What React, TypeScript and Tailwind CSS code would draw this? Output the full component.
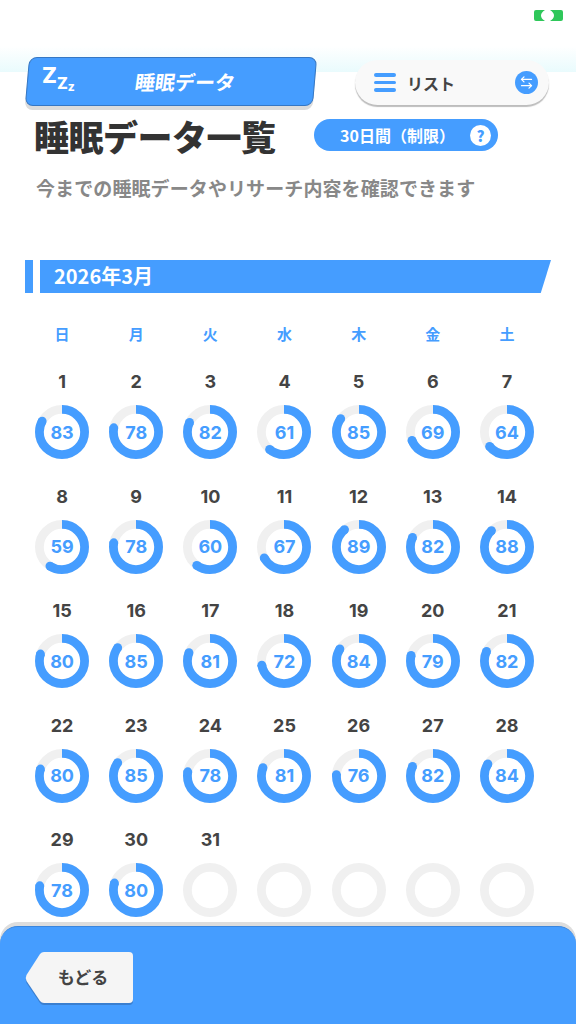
import { ArrowLeftRight } from 'lucide-react'

const SCORES = [
  83, 78, 82, 61, 85, 69, 64, 59, 78, 60, 67, 89, 82, 88, 80, 85, 81, 72, 84, 79, 82, 80, 85, 78, 81, 76, 82, 84, 78, 80,
  null,
]
const WEEKDAYS = ['日', '月', '火', '水', '木', '金', '土']
const BLUE = '#459dff'
const JP = "font-['Noto_Sans_CJK_JP',sans-serif]"

function Ring({ score }: { score: number | null }) {
  const r = 22.6
  const c = 2 * Math.PI * r
  const angle = ((score ?? 0) / 100) * 2 * Math.PI
  return (
    <div className="relative h-[54px] w-[54px]">
      <svg viewBox="0 0 54 54" className="h-full w-full">
        <circle cx="27" cy="27" r={r} fill="none" stroke="#f0f0f0" strokeWidth="8.800" />
        {score !== null && (
          <>
            <circle
              cx="27"
              cy="27"
              r={r}
              fill="none"
              stroke={BLUE}
              strokeWidth="8.800"
              strokeDasharray={`${(score / 100) * c} ${c}`}
              transform="rotate(-90 27 27)"
            />
            <circle cx={27 + r * Math.sin(angle)} cy={27 - r * Math.cos(angle)} r="4.400" fill={BLUE} />
          </>
        )}
      </svg>
      {score !== null && (
        <span className="absolute inset-0 flex items-center justify-center font-['Inter',sans-serif] text-[18px] font-bold text-[#459dff]">
          {score}
        </span>
      )}
    </div>
  )
}

export default function App() {
  return (
    <div
      className={`relative flex h-[1024px] w-[576px] flex-col overflow-hidden bg-[linear-gradient(to_bottom,#ffffff_46px,#e9fbfd_72px,#ffffff_72px)] ${JP}`}
    >
      {/* status icon */}
      <svg viewBox="0 0 29 11" className="absolute left-[534px] top-[10px] h-[11px] w-[29px]">
        <path d="M2 0H11Q7 2.500 7 5.500T11 11H2Q0 11 0 9V2Q0 0 2 0Z" fill="#2fc75a" />
        <path d="M27 0H16Q20 2.500 20 5.500T16 11H27Q29 11 29 9V2Q29 0 27 0Z" fill="#2fc75a" />
      </svg>

      <header className="flex items-start pl-[25px] pr-[27px] pt-[57px]">
        <div className="relative h-[49px] w-[292px]">
          <div className="absolute inset-0 mx-[2px] -skew-x-[5deg] rounded-[8px] border border-[#3577c4] bg-[#459dff] shadow-[0_4px_0_#dcdcdc]" />
          <div className="relative flex h-full items-center font-bold text-white">
            <span className="flex h-[31px] w-[54px] items-start pl-[17px] font-['Inter',sans-serif] font-extrabold leading-none">
              <span className="-mt-[2px] text-[22px]">Z</span>
              <span className="mt-[9px] text-[16px]">Z</span>
              <span className="mt-[15px] text-[12px]">z</span>
            </span>
            <span className="ml-[56px] -skew-x-[8deg] text-[20px] leading-none">睡眠データ</span>
          </div>
        </div>
        <div className="ml-auto mt-[3px] flex h-[45px] w-[194px] items-center rounded-full bg-[#f9f9f9] pl-[19px] pr-[11px] shadow-[0_2px_1px_#bdbdbd]">
          <span className="flex w-[22px] flex-col gap-[4px]">
            <span className="h-[3.5px] rounded-full bg-[#459dff]" />
            <span className="h-[3.5px] rounded-full bg-[#459dff]" />
            <span className="h-[3.5px] rounded-full bg-[#459dff]" />
          </span>
          <span className="ml-[11px] text-[16px] font-bold leading-none text-[#444]">リスト</span>
          <span className="ml-auto flex h-[23px] w-[23px] items-center justify-center rounded-full bg-[#459dff]">
            <ArrowLeftRight size={15} color="white" strokeWidth={2} />
          </span>
        </div>
      </header>

      <div className="mt-[7px] flex h-[44px] items-center pl-[34px]">
        <h1 className="w-[280px] text-[35px] font-black leading-none tracking-[-0.5px] text-[#333]">睡眠データ一覧</h1>
        <div className="flex h-[32px] w-[184px] items-center rounded-full bg-[#459dff] pl-[26px] text-[16px] font-bold text-white">
          <span className="whitespace-nowrap">30日間（制限）</span>
          <span className="ml-auto mr-[7px] flex h-[21px] w-[21px] items-center justify-center rounded-full bg-white text-[15px] font-black leading-none text-[#459dff]">
            ?
          </span>
        </div>
      </div>

      <p className="ml-[36px] mt-[17px] whitespace-nowrap text-[19px] font-bold leading-[28px] tracking-[0.1px] text-[#888]">
        今までの睡眠データやリサーチ内容を確認できます
      </p>

      <div className="ml-[25px] mt-[58px] flex h-[33px] gap-[7px]">
        <div className="w-[8px] bg-[#459dff]" />
        <div className="flex w-[511px] items-center bg-[#459dff] pb-[2px] pl-[14px] text-[20px] font-bold text-white [clip-path:polygon(0_0,100%_0,98%_100%,0_100%)]">
          2026年3月
        </div>
      </div>

      <div className="ml-[25px] mt-[30px] grid w-[519px] grid-cols-7 justify-items-center">
        {WEEKDAYS.map((d) => (
          <div key={d} className="h-[22px] text-[15px] font-bold leading-[22px] text-[#459dff]">
            {d}
          </div>
        ))}
      </div>

      <div className="ml-[25px] mt-[24px] grid w-[519px] grid-cols-7 justify-items-center gap-y-[24.5px]">
        {SCORES.map((score, i) => (
          <div key={i} className="flex flex-col items-center">
            <span className="h-[26px] font-['Inter',sans-serif] text-[18px] font-bold leading-[26px] text-[#444]">
              {i + 1}
            </span>
            <div className="mt-[10px]">
              <Ring score={score} />
            </div>
          </div>
        ))}
        {[0, 1, 2, 3].map((i) => (
          <div key={`empty-${i}`} className="mt-[36px]">
            <Ring score={null} />
          </div>
        ))}
      </div>

      <footer className="absolute inset-x-0 bottom-0 h-[98px] rounded-t-[18px] border-t border-[#3a86de] bg-[#459dff] pl-[25px] pt-[25px] shadow-[0_-4px_0_#dddddd]">
        <button type="button" className="relative flex h-[51px] w-[108px] items-center justify-center pl-[10px]">
          <svg viewBox="0 0 108 53" className="absolute left-0 top-0 h-[53px] w-[108px]">
            <path
              d="M15 3Q16.500 1 19 1H104Q108 1 108 5V48Q108 52 104 52H19Q16.500 52 15 50L1.500 30Q0 27 1.500 24Z"
              fill="#3a7fd0"
              transform="translate(0 1)"
            />
            <path
              d="M15 2Q16.500 0 19 0H104Q108 0 108 4V47Q108 51 104 51H19Q16.500 51 15 49L1.500 29Q0 26 1.500 23Z"
              fill="#f5f5f5"
            />
          </svg>
          <span className="relative -ml-[2px] -mt-[2px] text-[17px] font-bold text-[#444]">もどる</span>
        </button>
      </footer>
    </div>
  )
}
